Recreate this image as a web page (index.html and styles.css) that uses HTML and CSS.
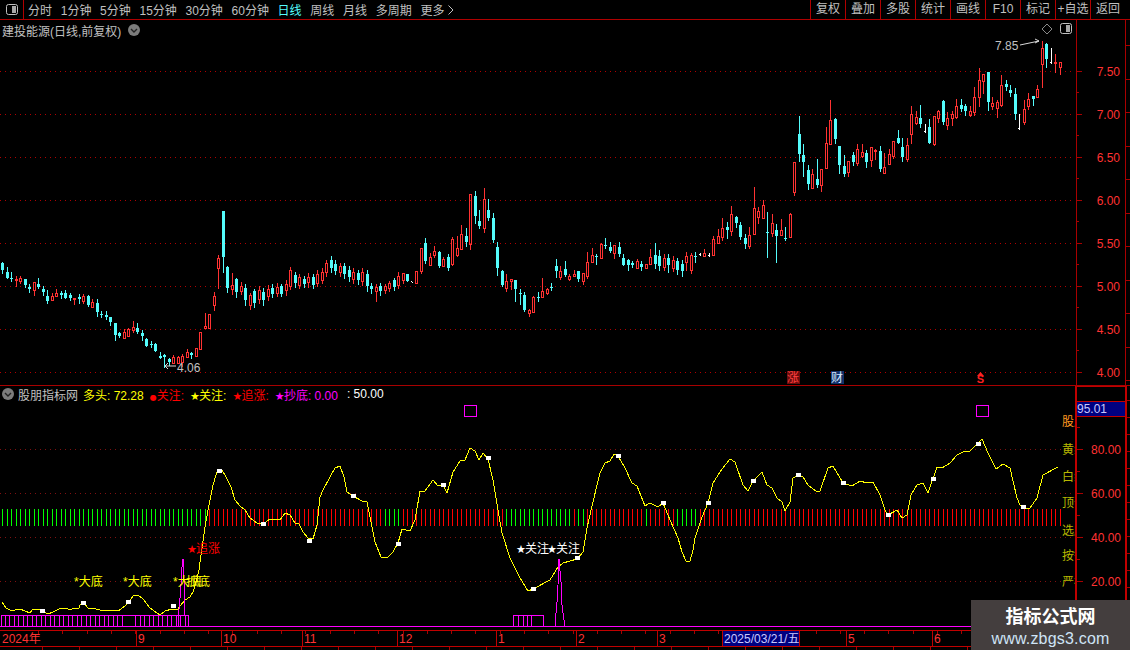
FILE: index.html
```html
<!DOCTYPE html>
<html lang="zh-CN">
<head>
<meta charset="utf-8">
<title>建投能源 K线</title>
<link rel="stylesheet" href="styles.css">
</head>
<body>
<div class="screen">
  <header class="toolbar">
    <div class="layout-btn">
      <svg class="panel-icon" viewBox="0 0 12 12"><rect x="0.5" y="0.5" width="11" height="10" rx="2" class="panel-icon-box"/><rect x="6" y="2" width="4" height="7" class="panel-icon-fill"/></svg>
    </div>
    <nav class="periods">
      <span>分时</span><span>1分钟</span><span>5分钟</span><span>15分钟</span><span>30分钟</span><span>60分钟</span>
      <span class="is-active">日线</span><span>周线</span><span>月线</span><span>多周期</span>
      <span class="more">更多<svg class="more-arrow" viewBox="0 0 6 10"><path d="M0.5 0.5 L5 5 L0.5 9.5"/></svg></span>
    </nav>
    <nav class="actions">
      <span>复权</span><span>叠加</span><span>多股</span><span>统计</span><span>画线</span><span>F10</span><span>标记</span><span>+自选</span><span>返回</span>
    </nav>
  </header>

  <section class="panel panel-main">
    <svg id="kline" class="chart" viewBox="0 20 1130 365" width="1130" height="365"></svg>
    <div class="panel-title">
      <span>建投能源(日线,前复权)</span>
      <svg class="round-toggle" viewBox="0 0 12 12"><circle cx="6" cy="6" r="6"/><path d="M3 5 L6 8 L9 5"/></svg>
    </div>
    <div class="panel-tools">
      <svg class="diamond" viewBox="0 0 12 12"><path d="M6 1 L11 6 L6 11 L1 6 Z"/></svg>
      <svg class="panel-icon" viewBox="0 0 12 12"><rect x="0.5" y="0.5" width="11" height="10" rx="2" class="panel-icon-box"/><rect x="6" y="2" width="4" height="7" class="panel-icon-fill"/></svg>
    </div>
  </section>

  <section class="panel panel-sub">
    <svg id="indicator" class="chart" viewBox="0 386 1130 244" width="1130" height="244"></svg>
    <div class="legend">
      <svg class="round-toggle" viewBox="0 0 12 12"><circle cx="6" cy="6" r="6"/><path d="M3 5 L6 8 L9 5"/></svg>
      <span class="legend-name">股朋指标网</span>
      <span class="lg-yellow lg-first">多头: 72.28</span>
      <span class="lg-red"><i class="bullet">●</i>关注:</span>
      <span class="lg-yellow"><i class="star">★</i>关注:</span>
      <span class="lg-red"><i class="star">★</i>追涨:</span>
      <span class="lg-magenta"><i class="star">★</i>抄底: 0.00</span>
      <span class="lg-white">: 50.00</span>
    </div>
  </section>

  <svg id="dates" class="chart" viewBox="0 630 1130 20" width="1130" height="20"></svg>

  <aside class="watermark">
    <strong>指标公式网</strong>
    <span>www.zbgs3.com</span>
  </aside>
</div>
<script src="script.js"></script>
</body>
</html>
```

FILE: styles.css
```css
* { box-sizing: border-box; }

html, body {
  margin: 0;
  background: #000;
}

body {
  width: 1130px;
  height: 650px;
  overflow: hidden;
  font-family: "Liberation Sans", "Noto Sans CJK SC", sans-serif;
  font-size: 12px;
  color: #c0c0c0;
}

.screen {
  position: relative;
  width: 1130px;
  height: 650px;
  background: #000;
  overflow: hidden;
}

.toolbar {
  display: flex;
  align-items: center;
  height: 20px;
  border-bottom: 1px solid #b00000;
}

.layout-btn {
  display: flex;
  align-items: center;
  justify-content: center;
  width: 24px;
  height: 19px;
  border-right: 1px solid #b00000;
}

.panel-icon { width: 12px; height: 12px; display: block; }
.panel-icon-box { fill: #000; stroke: #c0c0c0; stroke-width: 1; }
.panel-icon-fill { fill: #a8a8a8; }

.periods {
  display: flex;
  align-items: center;
  gap: 8.7px;
  margin-left: 4px;
  white-space: nowrap;
}

.is-active { color: #54fcfc; }

.more {
  display: flex;
  align-items: center;
  gap: 4px;
}

.more-arrow {
  width: 6px;
  height: 10px;
  fill: none;
  stroke: #c0c0c0;
}

.actions {
  display: flex;
  margin-left: auto;
  padding-right: 5px;
  height: 19px;
}

.actions span {
  width: 35px;
  border-left: 1px solid #b00000;
  text-align: center;
  line-height: 19px;
  white-space: nowrap;
}

.panel {
  position: relative;
}

.panel-main {
  height: 366px;
  border-bottom: 1px solid #a80000;
}

.panel-sub { height: 244px; }

.chart { display: block; }

.panel-title {
  position: absolute;
  left: 2px;
  top: 1px;
  height: 18px;
  display: flex;
  align-items: center;
  gap: 7px;
}

.round-toggle { width: 12px; height: 12px; flex: none; }
.round-toggle circle { fill: #7c7c7c; }
.round-toggle path { fill: none; stroke: #222; stroke-width: 1.4; }

.panel-tools {
  position: absolute;
  left: 1041px;
  top: 3px;
  display: flex;
  align-items: center;
  gap: 7px;
}

.diamond { width: 12px; height: 12px; fill: none; stroke: #8a8a8a; }

.legend {
  position: absolute;
  left: 2px;
  top: 0;
  height: 16px;
  display: flex;
  align-items: center;
  white-space: nowrap;
}

.legend span { margin-right: 6px; }
.legend .legend-name { margin: 0 0 0 4px; }
.legend .lg-first { margin-left: 5px; }
.legend .lg-magenta { margin-right: 9px; }
.star { font-style: normal; font-size: 11px; letter-spacing: -0.8px; font-family: "DejaVu Sans", sans-serif; }
.bullet { font-style: normal; font-size: 8px; font-family: "DejaVu Sans", sans-serif; }
.lg-yellow { color: #ffff00; }
.lg-red { color: #ff0000; }
.lg-magenta { color: #ff00ff; }
.lg-white { color: #fff; }

.watermark {
  position: absolute;
  left: 971px;
  top: 600px;
  width: 159px;
  height: 50px;
  background: #443e3e;
  display: flex;
  flex-direction: column;
  align-items: center;
  gap: 1px;
  padding-top: 5px;
}

.watermark strong {
  font-size: 18px;
  line-height: 24px;
  color: #fff;
  font-weight: 700;
}

.watermark span {
  font-size: 16px;
  line-height: 17px;
  color: #cfe4f6;
  letter-spacing: 0.2px;
}

/* SVG pieces */
.c-up { fill: none; stroke: #ff3232; }
.c-up-fill { fill: #ff3232; }
.c-down { fill: #54fcfc; }
.c-flat { fill: #fff; }
.crisp { shape-rendering: crispEdges; }

.grid-main { stroke: #b00000; stroke-dasharray: 1 4; stroke-width: 1; }
.grid-sub { stroke: #801010; stroke-dasharray: 1 4; stroke-width: 1; }
.axis { fill: #a80000; }
.axis-strong { fill: #c00000; }
.axis-label { fill: #ff3232; font-size: 12px; text-anchor: end; }

.note { fill: #c0c0c0; font-size: 12px; }
.note-line { fill: none; stroke: #d8d8d8; stroke-width: 1; }
.tag { font-size: 12px; }
.tag-s { font-size: 11px; font-weight: 700; }
.tag-box { stroke: none; }

.bar-red { fill: #ff0000; }
.bar-green { fill: #00ff00; }
.curve { fill: none; stroke: #ffff00; stroke-width: 1; shape-rendering: crispEdges; }
.dot { fill: #fff; }
.comb { fill: none; stroke: #ff00ff; stroke-width: 1; shape-rendering: crispEdges; }
.marker { fill: none; stroke: #ff00ff; stroke-width: 1; shape-rendering: crispEdges; }
.base { fill: #ff00ff; }

.sig { font-size: 12px; }
.sig-yellow { fill: #ffff00; }
.sig-red { fill: #ff0000; }
.sig-white { fill: #fff; }
.side-orange { fill: #ff9a20; font-size: 12px; }
.side-olive { fill: #b8b800; font-size: 12px; }

.value-box { fill: #000080; }
.value-text { fill: #c8c8ff; font-size: 12px; }

.date-label { fill: #ff3232; font-size: 12px; }
.date-box { fill: #000080; stroke: #c00000; }
.date-text { fill: #c8c8ff; font-size: 12px; }
```

FILE: script.js
```js
// Price bars: colour, high, body top, body bottom, low (pixel rows on the chart).
const CANDLES = `
c 262 263 270 273|c 267 272 278 278|c 272 278 279 281|r 276 279 280 286|r 276 278 281 283|c 279 279 285 287
c 284 287 289 292|r 282 282 290 295|c 278 284 287 288|c 286 289 292 295|c 290 296 301 303|r 293 296 300 300
r 289 293 296 296|c 291 293 295 298|c 290 293 298 298|c 293 295 298 300|r 298 298 299 304|c 294 297 299 303
r 294 296 301 303|c 295 296 305 306|r 299 302 307 307|c 299 303 312 316|c 311 314 315 317|c 311 315 317 319
c 317 317 322 325|c 323 323 335 340|c 332 333 336 337|r 329 332 338 338|r 328 329 336 336|r 321 327 330 332
c 323 328 332 333|c 330 333 336 340|c 338 339 346 346|c 341 344 345 347|c 343 344 351 351|c 352 356 358 358
c 354 355 357 367|c 358 359 362 365|r 355 357 363 363|r 356 357 363 363|r 354 356 362 366|r 349 352 357 357
c 352 353 355 358|r 348 348 356 356|r 332 332 349 349|r 313 326 328 328|r 314 314 328 328|r 292 296 305 310
r 255 258 268 288|c 211 211 257 272|c 266 267 288 292|r 273 285 289 294|c 278 279 292 297|r 282 286 291 294
c 284 288 300 305|r 293 295 305 309|c 289 291 303 307|r 286 290 299 303|c 288 292 300 305|r 285 289 296 300
c 284 288 294 297|r 283 287 293 296|c 284 286 294 296|r 280 284 290 295|r 267 270 286 289|c 272 275 283 287
r 274 277 285 288|c 276 279 284 287|r 273 277 282 287|c 274 277 285 288|r 270 274 283 286|r 268 272 280 283
r 260 263 272 276|c 256 260 268 272|c 260 264 271 274|r 263 266 272 276|c 263 266 274 278|c 266 270 277 281
r 268 272 279 283|c 270 273 280 284|r 268 272 281 285|c 270 274 286 291|c 283 286 289 293|r 284 287 291 301
c 283 286 291 295|r 284 286 290 293|r 281 283 288 291|c 278 280 287 290|r 272 276 285 288|r 273 273 280 283
c 274 274 281 281|w 279 282 283 285|r 271 271 283 283|r 248 248 271 273|c 238 243 261 263|r 253 257 265 265
r 246 251 255 257|c 251 252 266 267|r 257 259 266 266|c 254 257 268 270|r 237 239 264 265|r 236 248 255 256
r 225 234 249 249|c 228 236 242 246|r 194 194 244 249|c 191 196 216 223|c 210 221 226 228|r 188 199 228 232
c 199 210 218 220|c 213 218 240 242|c 242 247 268 275|c 270 271 285 286|r 274 281 288 291|r 279 279 281 289
c 280 280 289 301|c 289 293 294 304|c 292 295 310 311|r 309 310 313 316|r 296 297 312 312|c 292 297 298 301
r 278 291 297 297|r 288 289 293 294|c 283 287 288 290|c 259 266 271 277|r 266 271 277 279|c 261 269 275 276
r 274 276 279 280|r 270 274 276 276|c 271 271 279 281|r 273 273 281 284|r 252 262 276 278|r 248 255 262 262
c 254 256 257 264|r 243 244 258 258|c 238 245 246 248|c 242 247 251 252|r 245 245 253 258|c 242 247 254 256
c 254 258 265 265|c 259 260 265 270|c 261 263 265 267|r 259 261 268 268|c 261 264 267 270|r 264 264 268 268
r 249 257 264 264|c 243 255 264 268|c 250 256 266 270|r 254 258 267 270|c 254 258 265 272|r 256 260 268 271
c 258 261 270 274|c 260 264 271 276|r 252 256 262 270|r 253 255 270 273|c 252 256 257 262|w 252 253 256 258
r 249 253 256 256|w 253 253 257 257|r 236 239 255 255|r 229 236 243 243|r 218 228 237 240|c 222 227 230 238
r 206 214 231 235|c 216 217 223 227|c 222 225 237 239|c 234 238 244 248|r 227 235 246 248|r 187 208 234 234
r 207 211 217 223|r 200 205 218 218|c 212 232 233 257|r 214 223 233 236|c 224 230 236 262|r 219 230 235 235
c 227 238 239 240|r 213 214 237 237|r 162 162 192 195|c 116 134 154 161|c 144 155 162 176|c 165 170 184 189
r 169 174 188 188|c 159 179 185 187|r 169 169 185 191|r 127 143 168 168|r 100 120 144 144|c 118 119 139 143
c 146 146 165 173|c 155 166 174 176|r 161 161 172 176|c 152 155 162 165|r 144 149 163 165|r 144 152 156 157
c 150 153 162 167|r 147 147 160 166|r 149 150 151 159|c 146 151 169 171|r 153 167 173 173|r 149 154 164 164
r 141 141 156 158|c 130 138 143 143|c 138 147 157 161|r 138 145 159 161|r 106 114 134 143|r 111 117 123 124
c 105 118 124 127|w 124 124 133 133|c 119 127 143 143|r 116 116 144 145|r 110 111 118 122|c 100 101 122 124
r 112 118 125 129|r 111 114 118 125|r 99 106 117 118|c 99 105 109 111|c 104 106 111 115|r 106 111 115 116
r 87 97 112 115|r 68 80 97 106|r 74 74 81 93|c 72 72 102 110|r 97 103 106 109|r 100 102 108 117
r 75 85 105 106|c 80 84 87 90|c 85 90 93 96|c 88 94 114 119|w 114 114 130 130|r 100 109 122 124
r 93 99 106 109|c 96 96 99 105|r 85 89 97 97|r 41 48 64 87|c 43 44 59 67|w 48 48 64 64
r 54 62 63 72|r 62 62 67 74`
  .trim().split(/[|\n]/).map(s => s.trim().split(' '));

const CURVE = `2,602 6,608 10,610 15,610 20,609 25,611 30,613 33,609 38,609 43,611 48,614 53,612 59,609 64,608 68,609 72,609 79,608 80,605 84,603 88,608 92,608 100,610 107,611 112,610 118,611 125,606 130,601 133,596 138,595 143,599 150,608 157,613 160,615 165,611 172,609 178,609 180,606 185,600 190,597 193,592 196,582 199,570 201,555 205,527 208,510 210,500 213,485 217,472 219,470 222,470 226,477 231,487 235,500 240,506 245,510 250,518 257,523 263,524 270,519 280,520 285,513 290,515 295,523 299,524 303,532 308,538 313,539 317,525 320,497 323,490 330,477 335,468 340,466 344,477 347,492 353,496 362,501 367,502 372,527 375,542 381,557 388,557 393,552 398,543 402,529 410,531 415,520 420,491 425,491 433,480 438,486 443,485 447,493 453,472 460,461 465,460 470,448 475,451 479,460 483,453 488,459 493,480 498,510 502,533 510,558 520,578 528,591 533,589 550,580 558,567 563,563 577,559 583,552 587,528 592,506 600,473 605,463 610,461 614,454 618,456 625,468 632,483 637,486 645,506 650,503 658,507 663,503 670,520 678,538 682,552 686,561 690,561 693,550 695,538 702,517 708,503 713,483 722,469 730,459 735,462 743,485 748,491 753,481 762,472 767,485 772,488 777,498 782,502 785,511 790,502 793,478 798,475 803,477 808,485 817,492 820,491 828,468 833,466 843,483 852,486 860,481 867,483 873,482 880,495 885,510 888,515 897,510 902,518 907,515 911,495 917,485 923,483 928,493 937,467 942,468 950,463 957,455 963,452 970,451 977,444 982,439 988,453 996,469 1003,464 1010,468 1017,498 1020,505 1025,508 1030,508 1037,498 1043,475 1058,467`;

const DOTS = [[42,611],[83,603],[128,602],[173,606],[219,471],[263,524],[309,541],[353,496],[398,544],[443,485],[488,458],[533,589],[577,558],[618,456],[663,503],[708,503],[753,481],[798,475],[843,483],[888,515],[933,479],[978,444],[1023,507]];

const NS = 'http://www.w3.org/2000/svg';
function add(parent, tag, cls, attrs, text) {
  const el = document.createElementNS(NS, tag);
  if (cls) el.setAttribute('class', cls);
  for (const k in attrs) el.setAttribute(k, attrs[k]);
  if (text != null) el.textContent = text;
  parent.appendChild(el);
  return el;
}
const slotX = i => Math.round(2.3 + 4.5 * i);
const rect = (p, cls, x, y, w, h) => add(p, 'rect', cls + ' crisp', { x, y, width: w, height: h });

/* ---------- price panel ---------- */
const kline = document.getElementById('kline');
const prices = [['7.50', 71], ['7.00', 114], ['6.50', 157], ['6.00', 200], ['5.50', 243], ['5.00', 286], ['4.50', 329], ['4.00', 372]];
prices.forEach(([label, y]) => {
  add(kline, 'line', 'grid-main', { x1: 0, x2: 1075, y1: y + 0.5, y2: y + 0.5 });
  rect(kline, 'axis', 1076, y, 6, 1);
  rect(kline, 'axis', 1076, y + 21, 3, 1);
  add(kline, 'text', 'axis-label', { x: 1120, y: y + 5 }, label);
});
rect(kline, 'axis', 1076, 20, 1, 365);
rect(kline, 'axis', 1125, 20, 1, 365);
for (let y = 45; y < 385; y += 33.5) rect(kline, 'axis', 1126, Math.round(y), 4, 1);

CANDLES.forEach(([c, hi, top, bot, lo], i) => {
  const x = slotX(i);
  hi = +hi; top = +top; bot = +bot; lo = +lo;
  if (c === 'w') {
    rect(kline, 'c-flat', x, top, 1, Math.max(bot - top, 1));
    rect(kline, 'c-flat', x - 1, bot - 2, 1, 1);
  } else if (c === 'c') {
    rect(kline, 'c-down', x, hi, 1, lo - hi + 1);
    rect(kline, 'c-down', x - 1, top, 3, Math.max(bot - top, 1));
  } else {
    if (top > hi) rect(kline, 'c-up-fill', x, hi, 1, top - hi);
    if (lo > bot) rect(kline, 'c-up-fill', x, bot, 1, lo - bot + 1);
    if (bot - top < 2) rect(kline, 'c-up-fill', x - 1, top, 3, 2);
    else add(kline, 'rect', 'c-up crisp', { x: x - 0.5, y: top + 0.5, width: 2, height: bot - top });
  }
});

add(kline, 'text', 'note', { x: 995, y: 50 }, '7.85');
add(kline, 'path', 'note-line', { d: 'M1020 45 L1039 41 M1035 39 L1039 41 L1035 43' });
add(kline, 'text', 'note', { x: 177, y: 372 }, '4.06');
add(kline, 'path', 'note-line', { d: 'M176 366 L165 366 M168 363 L165 366 L168 369' });

[['涨', 787, 793, '#6a0c0c', '#ff4040'], ['财', 831, 837, '#12306a', '#d8e8ff']].forEach(([t, x, cx, bg, fg]) => {
  add(kline, 'rect', 'tag-box crisp', { x, y: 371, width: 13, height: 13, fill: bg });
  add(kline, 'text', 'tag', { x: cx, y: 382, fill: fg, 'text-anchor': 'middle' }, t);
});
add(kline, 'text', 'tag-s', { x: 980.5, y: 383, fill: '#ff2020', 'text-anchor': 'middle' }, 'S');
add(kline, 'path', '', { d: 'M977 376 L980.5 372 L984 376 Z', fill: '#ff2020' });

/* ---------- indicator panel ---------- */
const ind = document.getElementById('indicator');
[['80.00', 449], ['60.00', 493], ['40.00', 537], ['20.00', 581]].forEach(([label, y]) => {
  add(ind, 'line', 'grid-sub', { x1: 0, x2: 1075, y1: y + 0.5, y2: y + 0.5 });
  rect(ind, 'axis', 1077, y, 6, 1);
  rect(ind, 'axis', 1077, y + 22, 3, 1);
  add(ind, 'text', 'axis-label', { x: 1121, y: y + 5 }, label);
});
rect(ind, 'axis', 1077, 427, 3, 1);
rect(ind, 'axis-strong', 1075, 386, 2, 244);
rect(ind, 'axis-strong', 1125, 386, 2, 244);
rect(ind, 'axis-strong', 1075, 386, 52, 1);
for (let y = 400; y < 630; y += 17) rect(ind, 'axis', 1127, y, 3, 1);

rect(ind, 'axis-strong', 1077, 401, 48, 1);
rect(ind, 'value-box', 1077, 402, 48, 14);
rect(ind, 'axis-strong', 1077, 416, 48, 1);
add(ind, 'text', 'value-text', { x: 1077, y: 413 }, '95.01');

// Bar strip: green stretches, red otherwise.
const greenRuns = [[0, 45], [85, 88], [112, 126], [128, 129], [143, 143], [150, 154]];
for (let i = 0; i <= 235; i++) {
  const green = greenRuns.some(([a, b]) => i >= a && i <= b);
  rect(ind, green ? 'bar-green' : 'bar-red', slotX(i), 509, 1, 17);
}

add(ind, 'polyline', 'curve', { points: CURVE });
DOTS.forEach(([x, y]) => rect(ind, 'dot', x - 2, y - 2, 5, 4));

[[464.5, 405.5], [976.5, 405.5]].forEach(([x, y]) => add(ind, 'rect', 'marker', { x, y, width: 12, height: 11 }));

// Comb blocks along the base line.
rect(ind, 'base', 0, 626, 1075, 1);
add(ind, 'path', 'comb', { d: 'M1.5 626 V615.5 H188.5 V626' });
for (let i = 0; i <= 39; i++) {
  const x = 5 + 4.5 * i;
  if (x > 122 && x < 133) continue;
  add(ind, 'line', 'comb', { x1: x, x2: x, y1: 615, y2: 626 });
}
add(ind, 'line', 'comb', { x1: 135, x2: 135, y1: 615, y2: 626 });
add(ind, 'path', 'comb', { d: 'M178.5 626 V615 L180.5 593 L182 567 L183 559 L184 580 L185 615 V626' });
add(ind, 'path', 'comb', { d: 'M513.5 626 V615.5 H543.5 V626 M518.5 615 V626 M523 615 V626 M527 615 V626 M531.5 615 V626' });
add(ind, 'path', 'comb', { d: 'M555.5 626 V618 L557 602 L558 585 L559 559 L561 582 L562 605 L564 620 V626' });

function signal(x, y, cls, text, star) {
  const t = add(ind, 'text', 'sig ' + cls, { x, y });
  if (star) add(t, 'tspan', 'star', {}, '★');
  add(t, 'tspan', '', {}, text);
}
signal(74, 586, 'sig-yellow', '*大底');
signal(123, 586, 'sig-yellow', '*大底');
signal(173, 586, 'sig-yellow', '*大底');
signal(186, 586, 'sig-yellow', '抄底');
signal(187, 553, 'sig-red', '追涨', true);
signal(516, 553, 'sig-white', '关注', true);
signal(547, 553, 'sig-white', '关注', true);

// Side caption, cut off by the axis.
const clip = add(add(ind, 'defs'), 'clipPath', '', { id: 'side-clip' });
add(clip, 'rect', '', { x: 1000, y: 386, width: 75, height: 244 });
const side = add(ind, 'g', '', { 'clip-path': 'url(#side-clip)' });
[['股朋', 426, 'side-orange'], ['黄线', 454, 'side-olive'], ['白线', 481, 'side-olive'], ['顶部', 507, 'side-olive'], ['选股', 535, 'side-olive'], ['按键', 560, 'side-olive'], ['严格', 586, 'side-olive']]
  .forEach(([t, y, cls]) => add(side, 'text', cls, { x: 1062, y }, t));

/* ---------- date axis ---------- */
const dates = document.getElementById('dates');
rect(dates, 'axis-strong', 0, 630, 1130, 1);
rect(dates, 'axis-strong', 0, 646, 1130, 1);
for (let x = 38; x < 1130; x += 24.3) rect(dates, 'axis', Math.round(x), 631, 1, 3);
for (let x = 42; x < 1130; x += 37) rect(dates, 'axis', Math.round(x), 647, 1, 3);
[[136, '9'], [221, '10'], [302, '11'], [397, '12'], [496, '1'], [576, '2'], [657, '3'], [846, '5'], [932, '6']].forEach(([x, t]) => {
  rect(dates, 'axis-strong', x, 630, 1, 16);
  add(dates, 'text', 'date-label', { x: x + 2, y: 643 }, t);
});
add(dates, 'text', 'date-label', { x: 2, y: 643 }, '2024年');
add(dates, 'rect', 'date-box crisp', { x: 722.5, y: 630.5, width: 77, height: 16 });
add(dates, 'text', 'date-text', { x: 724, y: 643 }, '2025/03/21/五');
```
